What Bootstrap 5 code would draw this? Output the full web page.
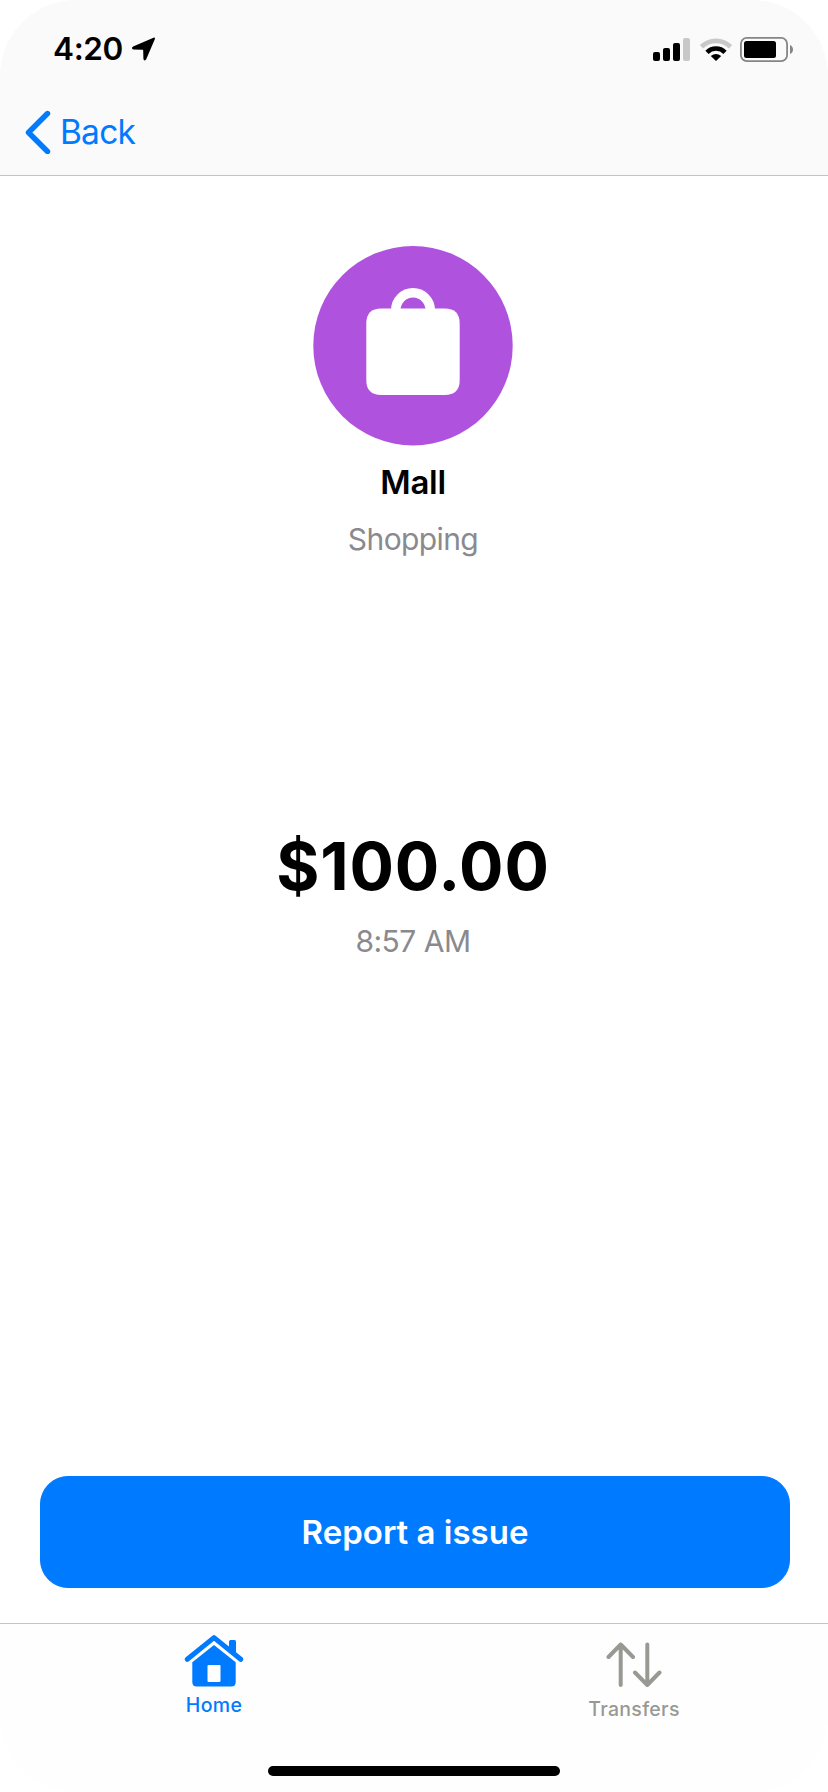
<!DOCTYPE html>
<html lang="en">
<head>
<meta charset="utf-8">
<meta name="viewport" content="width=device-width, initial-scale=1">
<title>Mall</title>
<link href="https://cdn.jsdelivr.net/npm/bootstrap@5.3.0/dist/css/bootstrap.min.css" rel="stylesheet">
<style>
  body { font-family: Inter, "Liberation Sans", sans-serif; color: #000; background: #fff; }
  svg { display: block; flex: none; }
  .screen { height: 1792px; width: 828px; overflow: hidden; }
  .top-area { height: 176px; background: #fafafa; border-bottom: 1px solid #c4c4c6; border-radius: 76px 76px 0 0; }
  .status { height: 98px; padding-left: 53px; padding-right: 35px; }
  .clock { font-size: 31.5px; font-weight: 600; line-height: 40px; width: 79px; letter-spacing: -.35px; white-space: nowrap; }
  .wifi { margin-left: 8px; margin-right: 6px; }
  .back-row { height: 68px; padding-left: 24px; }
  .back-link { color: #007aff; font-size: 33.5px; line-height: 40px; letter-spacing: -.8px; }
  .details { padding-top: 70px; padding-right: 2px; }
  .place { font-size: 33px; font-weight: 600; line-height: 40px; margin-top: 16px; letter-spacing: -.3px; }
  .kind, .moment { font-size: 30px; line-height: 36px; color: #8a8a8e; }
  .kind { margin-top: 19px; letter-spacing: -.6px; }
  .amount { font-size: 66px; font-weight: 700; line-height: 80px; margin-top: 269px; letter-spacing: .8px; }
  .moment { margin-top: 17px; letter-spacing: -.5px; }
  .action { padding: 0 38px 35px 40px; }
  .report { height: 112px; border-radius: 28px; font-size: 33px; font-weight: 600; letter-spacing: 0; padding: 2px 0 0;
    --bs-btn-bg: #007aff; --bs-btn-border-color: #007aff; --bs-btn-color: #fff; }
  .tabs { height: 169px; border-top: 1px solid #c4c4c6; background: #fefefe; border-radius: 0 0 76px 76px; }
  .tab-row { gap: 220px; padding-left: 114px; }
  .tab-link { width: 200px; font-size: 19.5px; line-height: 24px; font-weight: 500; color: #999994; letter-spacing: .3px; }
  .tab-link.active { color: #007aff; }
  .indicator { width: 292px; height: 10px; background: #000; margin: 0 auto 16px; }
</style>
</head>
<body>
<div class="screen d-flex flex-column">
  <header class="top-area">
    <div class="status d-flex align-items-center">
      <span class="clock">4:20</span>
      <svg width="24" height="24" viewBox="0 0 24 24"><path d="M21.5 .7 1.1 9.6C-.6 10.5-.2 12.3 1.5 12.5L10.5 12.8Q11.200 12.8 11.200 13.5L11.4 21.5C11.5 23.700 13.4 24 14.200 22.300L22.8 2.200C23.4 .9 22.5 .3 21.5 .7Z"/></svg>
      <div class="ms-auto d-flex align-items-center">
        <svg width="37" height="24" viewBox="0 0 37 24"><rect y="15" width="7" height="9" rx="2"/><rect x="10" y="11" width="7" height="13" rx="2"/><rect x="20" y="6" width="7" height="18" rx="2"/><rect x="30" y="1" width="7" height="23" rx="2" fill="#c8c8c8"/></svg>
        <svg class="wifi" width="36" height="24" viewBox="0 0 36 24" fill="none"><path d="M3.500 9.800A20.500 20.500 0 0 1 32.500 9.800" stroke="#c8c8c8" stroke-width="4.800"/><path d="M9 15.300A12.700 12.700 0 0 1 27 15.300" stroke="#000" stroke-width="4.600"/><path d="M12.800 18.900Q18 15.200 23.200 18.900L18 24Z" fill="#000"/></svg>
        <svg width="53" height="26" viewBox="0 0 53 26"><rect x=".9" y="1.900" width="46.200" height="23.200" rx="6" fill="none" stroke="#858585" stroke-width="1.800"/><rect x="4" y="5" width="32" height="17" rx="2.500"/><path d="M50 9Q53 10.500 53 13.500T50 18Z" fill="#858585"/></svg>
      </div>
    </div>
    <nav class="back-row d-flex align-items-center">
      <a class="back-link d-flex align-items-center text-decoration-none" href="#">
        <svg width="36" height="44" viewBox="0 0 36 44"><path d="M23.500 3.500 4.500 22.500 23.500 41.500" fill="none" stroke="#007aff" stroke-width="5.400" stroke-linecap="round" stroke-linejoin="round"/></svg>
        <span>Back</span>
      </a>
    </nav>
  </header>
  <main class="details flex-grow-1 d-flex flex-column align-items-center">
    <svg width="200" height="200" viewBox="0 0 200 200"><circle cx="100" cy="99.700" r="99.700" fill="#af52de"/><path d="M82.800 64A17.200 17.200 0 0 1 117.200 64" fill="none" stroke="#fff" stroke-width="9.500"/><path d="M68.300 62.500H131.700Q146.700 62.500 146.700 77.500V134Q146.700 149 131.700 149H68.300Q53.300 149 53.300 134V77.500Q53.300 62.500 68.300 62.500Z" fill="#fff"/></svg>
    <h1 class="place mb-0">Mall</h1>
    <div class="kind">Shopping</div>
    <div class="amount">$100.00</div>
    <div class="moment">8:57 AM</div>
  </main>
  <div class="action"><button class="btn report w-100" type="button">Report a issue</button></div>
  <footer class="tabs d-flex flex-column">
    <nav class="tab-row d-flex flex-grow-1">
      <a class="tab-link active d-flex flex-column align-items-center text-decoration-none" href="#" aria-current="page">
        <svg width="60" height="69" viewBox="0 0 60 69" fill="#007aff"><path d="M3.300 35.300 30 13.600 56.700 35.300" fill="none" stroke="#007aff" stroke-width="5" stroke-linecap="round" stroke-linejoin="round"/><path d="M45 27V17.500Q45 16 46.500 16H50.500Q52 16 52 17.500V33Z"/><path fill-rule="evenodd" d="M30 21 51.700 38.300V58Q51.700 62.500 47.200 62.500H12.800Q8.300 62.500 8.300 58V38.300ZM24.500 41Q23.500 41 23.500 42V57Q23.500 58 24.500 58H35.500Q36.500 58 36.500 57V42Q36.500 41 35.500 41Z"/></svg>
        <span>Home</span>
      </a>
      <a class="tab-link d-flex flex-column align-items-center text-decoration-none" href="#">
        <svg width="56" height="73" viewBox="0 0 56 73" fill="none" stroke="#999994" stroke-width="4" stroke-linecap="round" stroke-linejoin="round"><path d="M14.700 61V20.500M2.500 33 14.700 20.500 27 33M41.300 20.500V61M29 48.500 41.300 61 53.500 48.500"/></svg>
        <span>Transfers</span>
      </a>
    </nav>
    <div class="indicator rounded-pill"></div>
  </footer>
</div>
<script src="https://cdn.jsdelivr.net/npm/bootstrap@5.3.0/dist/js/bootstrap.bundle.min.js"></script>
</body>
</html>
